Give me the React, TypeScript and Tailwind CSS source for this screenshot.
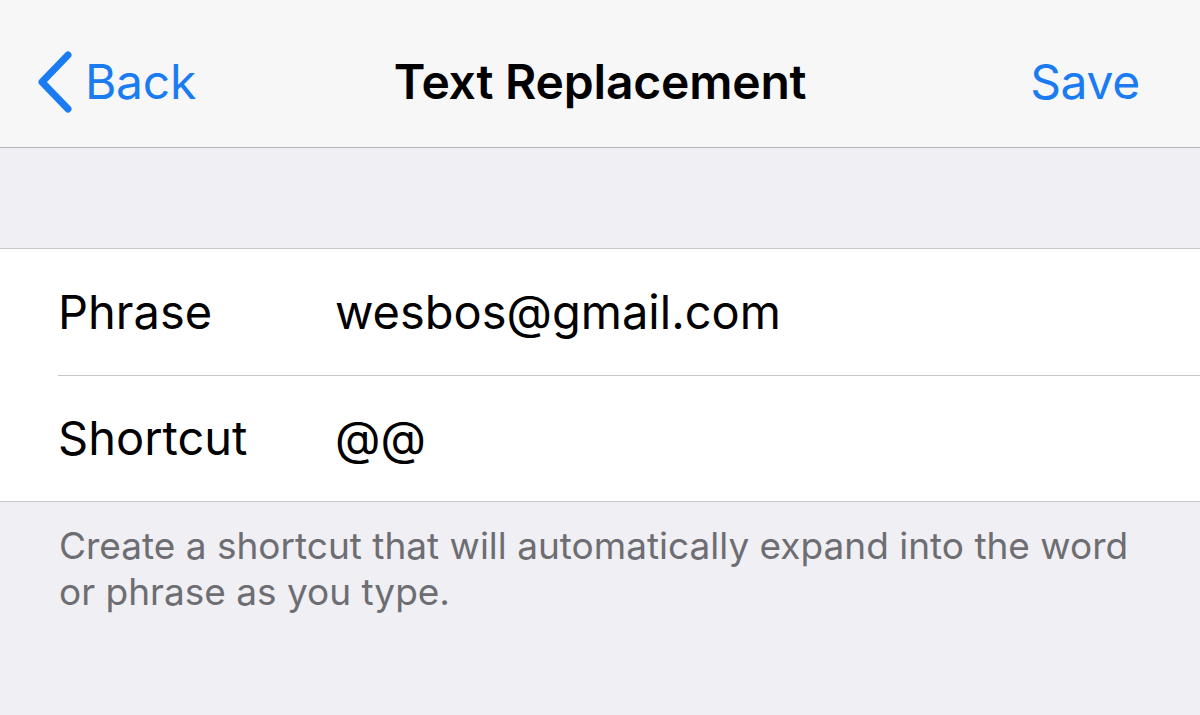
import React from "react";

const App = () => {
  return (
    <div className="w-[1200px] h-[715px] overflow-hidden bg-[#efeff4] font-['Inter','Liberation_Sans',sans-serif] antialiased">
      {/* nav bar */}
      <div className="h-[148px] bg-[#f7f7f8] border-b border-[#b4b4b7] flex items-center justify-between pt-[16px] px-[38px] relative">
        <button className="flex items-center gap-[13px] text-[#1b7cf2]">
          <svg width="34" height="62" viewBox="0 0 34 62" fill="none">
            <path d="M30 4 L4 31 L30 58" stroke="currentColor" strokeWidth="7" strokeLinecap="round" strokeLinejoin="round" />
          </svg>
          <span className="text-[48px] tracking-[-0.3px] leading-none">Back</span>
        </button>
        <h1 className="absolute left-1/2 top-[16px] bottom-0 flex items-center -translate-x-1/2 text-[48px] font-semibold text-black tracking-[-0.2px] leading-none">
          Text Replacement
        </h1>
        <button className="text-[48px] text-[#1b7cf2] tracking-[-0.3px] leading-none pr-[22px]">Save</button>
      </div>

      {/* gray band */}
      <div className="h-[101px] border-b border-[#c8c7cc]" />

      {/* rows */}
      <div className="bg-white border-b border-[#c8c7cc]">
        <div className="flex items-center h-[126px] pl-[58px]">
          <span className="w-[277px] text-[47px] text-black">Phrase</span>
          <span className="text-[47px] text-black">wesbos@gmail.com</span>
        </div>
        <div className="ml-[58px] border-t border-[#c8c7cc]" />
        <div className="flex items-center h-[125px] pl-[58px]">
          <span className="w-[277px] text-[47px] text-black">Shortcut</span>
          <span className="text-[47px] text-black">@@</span>
        </div>
      </div>

      {/* footer */}
      <p className="pl-[59px] pr-[40px] pt-[21px] text-[37px] leading-[46px] text-[#6d6d72]">
        Create a shortcut that will automatically expand into the word or phrase as you type.
      </p>
    </div>
  );
};

export default App;
